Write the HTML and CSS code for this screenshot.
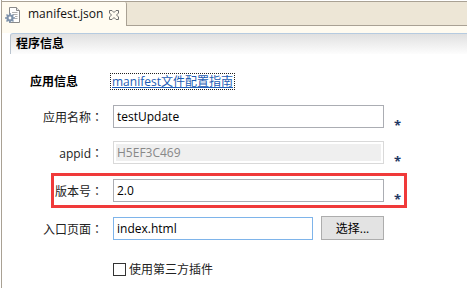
FILE: index.html
```html
<html>
<head>
<meta charset="utf-8">
<link rel="stylesheet" href="styles.css">
<title>manifest.json</title>
</head>
<body>
<div class="window">
	<div class="tabbar">
		<div class="tab">
			<svg class="tab-icon" width="16" height="16" viewBox="0 0 16 16">
				<path d="M4.5 0.5 H11.5 L14.5 3.5 V15.5 H4.5 Z" fill="#fff" stroke="#8a8a8a"/>
				<path d="M11.5 0.5 V3.5 H14.5" fill="#e8e8e8" stroke="#8a8a8a"/>
				<path d="M7 5.5 H12.5 M8 7.5 H12.5 M10 9.5 H12.5 M10 11.5 H12.5" stroke="#b0b0b0"/>
				<g transform="translate(5 11)">
					<circle r="3.6" fill="#7f93ab"/>
					<path d="M0 -5 V5 M-5 0 H5 M-3.5 -3.5 L3.5 3.5 M-3.5 3.5 L3.5 -3.5" stroke="#7f93ab" stroke-width="1.6"/>
					<circle r="1.4" fill="#fff"/>
				</g>
			</svg>
			<span class="tab-title">manifest.json</span>
			<svg class="tab-close" width="10" height="10" viewBox="0 0 10 10">
				<path d="M0.5 0.5 H3 L5 2.5 L7 0.5 H9.5 V3 L7.5 5 L9.5 7 V9.5 H7 L5 7.5 L3 9.5 H0.5 V7 L2.5 5 L0.5 3 Z" fill="none" stroke="#6e6e6e"/>
			</svg>
		</div>
	</div>
	<div class="strip"></div>
	<div class="section-head">程序信息</div>

	<div class="form">
		<div class="info-row">
			<span class="info-title">应用信息</span>
			<a class="guide-link" href="#">manifest文件配置指南</a>
		</div>

		<div class="field name-field">
			<label class="field-label">应用名称<span class="colon">：</span></label>
			<input class="text-input" type="text" value="testUpdate">
			<span class="star">*</span>
		</div>

		<div class="field appid-field">
			<label class="field-label">appid<span class="colon">：</span></label>
			<input class="text-input disabled" type="text" value="H5EF3C469" disabled>
			<span class="star">*</span>
		</div>

		<div class="field version-field highlight">
			<label class="field-label">版本号<span class="colon">：</span></label>
			<input class="text-input" type="text" value="2.0">
			<span class="star">*</span>
		</div>

		<div class="field entry-field">
			<label class="field-label">入口页面<span class="colon">：</span></label>
			<input class="text-input focused" type="text" value="index.html">
			<button class="pick-btn">选择...</button>
		</div>

		<div class="check-row">
			<span class="checkbox"></span>
			<span class="check-label">使用第三方插件</span>
		</div>
	</div>
</div>
</body>
</html>
```

FILE: styles.css
```css
body {
	margin: 0;
	font-family: "Open Sans", "Noto Sans CJK SC", sans-serif;
	font-size: 12px;
	color: #000;
	background-color: #fff;
}

.window {
	margin-left: 1px;
	border-left: 1px solid #a9a194;
	height: 288px;
	overflow: hidden;
}

.tabbar {
	display: flex;
	height: 23px;
	margin-top: 1px;
	border-top: 1px solid #a9a194;
	border-bottom: 1px solid #a9a194;
	background-color: #ede6d6;
}

.tab {
	display: flex;
	align-items: center;
	width: 124px;
	height: 24px;
	margin-bottom: -1px;
	border-right: 1px solid #a9a194;
	border-top-right-radius: 2px;
	background-color: #fffbf0;
}

.tab-icon {
	margin-left: 3px;
	margin-top: 1px;
}

.tab-title {
	margin-left: 7px;
	line-height: 16px;
	color: #111;
}

.tab-close {
	margin-left: 6px;
	margin-top: 1px;
}

.strip {
	height: 7px;
	background-color: #fffbf0;
}

.section-head {
	margin-left: 8px;
	height: 20px;
	padding-left: 5px;
	border-top: 1px solid #b6cbe0;
	border-left: 1px solid #b9c4cf;
	border-top-left-radius: 3px;
	background: linear-gradient(#e0e0e0, #fdfdfd);
	font-weight: bold;
	line-height: 20px;
}

.form {
	padding-top: 17px;
}

.info-row {
	display: flex;
	align-items: center;
	height: 20px;
}

.info-title {
	width: 73px;
	padding-left: 28px;
	font-weight: bold;
}

.guide-link {
	margin-left: 8px;
	padding: 0 1px;
	outline: 1px dotted #222;
	color: #1c5cb4;
	line-height: 15px;
}

.field {
	position: relative;
	display: flex;
	align-items: center;
	height: 23px;
}

.name-field {
	margin-top: 14px;
}

.appid-field {
	margin-top: 13px;
}

.version-field {
	margin-top: 15px;
}

.entry-field {
	margin-top: 15px;
}

.field-label {
	width: 101px;
	text-align: right;
	color: #222;
}

.colon {
	font-family: "Noto Sans CJK JP", sans-serif;
}

.text-input {
	box-sizing: border-box;
	width: 271px;
	height: 23px;
	margin-left: 10px;
	padding: 0 3px;
	border: 1px solid #abadb3;
	font-family: inherit;
	font-size: 12px;
	color: #000;
	background-color: #fff;
	outline: none;
}

.text-input.disabled {
	border-color: #d9d9d9;
	background-color: #efefef;
	color: #888;
	box-shadow: inset 0 0 0 2px #fff;
}

.text-input.focused {
	width: 200px;
	border-color: #7eb4ea;
}

.star {
	align-self: flex-end;
	margin-left: 10px;
	margin-bottom: -3px;
	height: 12px;
	line-height: 12px;
	font-size: 13px;
	font-weight: bold;
	color: #1f3864;
}

.highlight::after {
	content: "";
	position: absolute;
	left: 49px;
	top: -6px;
	width: 356px;
	height: 35px;
	box-sizing: border-box;
	border: 3px solid #f03a3a;
}

.pick-btn {
	box-sizing: border-box;
	width: 63px;
	height: 24px;
	margin-left: 8px;
	margin-top: -1px;
	border: 1px solid #adadad;
	background-color: #e3e3e3;
	font-family: inherit;
	font-size: 12px;
	color: #000;
}

.check-row {
	display: flex;
	align-items: center;
	margin-top: 20px;
	padding-left: 111px;
	height: 18px;
}

.checkbox {
	box-sizing: border-box;
	width: 13px;
	height: 13px;
	border: 1px solid #333;
	background-color: #fff;
}

.check-label {
	margin-left: 3px;
	color: #222;
}
```
